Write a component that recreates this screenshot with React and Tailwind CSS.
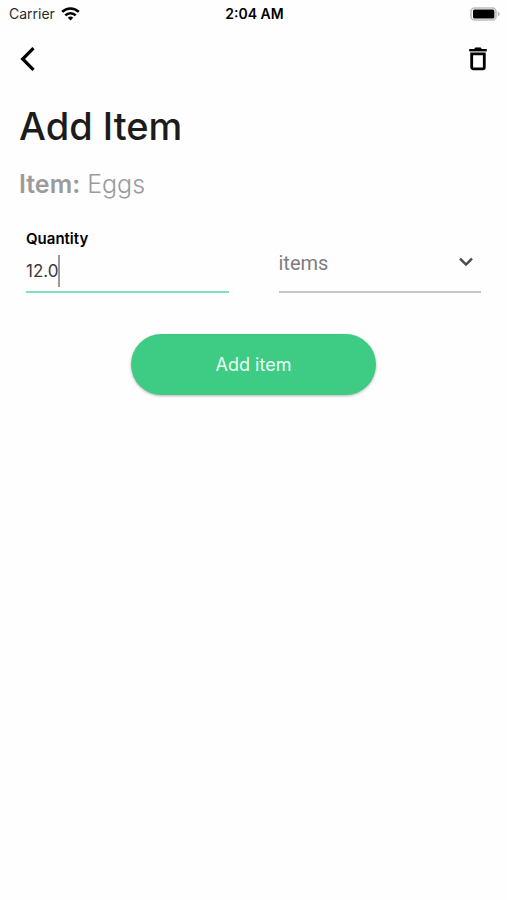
import React, { useState } from 'react';

function WifiIcon() {
    return (
        <svg width="19" height="14" viewBox="0 0 19 14" fill="none" stroke="#000" strokeWidth="2.7" aria-hidden="true">
            <path d="M1.2 4.9a11.8 11.8 0 0 1 16.6 0" />
            <path d="M4.3 8.4a7.4 7.4 0 0 1 10.4 0" />
            <path d="M9.5 13.6l-2.7-2.8a3.9 3.9 0 0 1 5.4 0z" fill="#000" stroke="none" />
        </svg>
    );
}

function BatteryIcon() {
    return (
        <svg width="30" height="14" viewBox="0 0 30 14" aria-hidden="true">
            <rect x="1" y="1" width="25" height="12" rx="3.5" fill="#fff" stroke="#bdbdbd" strokeWidth="1.6" />
            <rect x="3" y="2.6" width="21.4" height="8.8" rx="1.5" fill="#000" />
            <path d="M27.8 4.6v4.8c1-.4 1.8-1.3 1.8-2.4s-.8-2-1.8-2.4z" fill="#b5b5b5" />
        </svg>
    );
}

function BackIcon() {
    return (
        <svg width="16" height="24" viewBox="0 0 16 24" fill="none" stroke="#000" strokeWidth="3.2" aria-hidden="true">
            <path d="M13.5 1.2L2.7 12l10.8 10.8" />
        </svg>
    );
}

function TrashIcon() {
    return (
        <svg width="18" height="24" viewBox="0 0 18 24" fill="none" stroke="#000" aria-hidden="true">
            <path d="M0.2 3.2h17.6" strokeWidth="2.4" />
            <path d="M5.2 2.6l1.2-1.8h5.2l1.2 1.8z" fill="#000" strokeWidth="0.6" />
            <path d="M2.7 6.8h12.6v13.4a1.6 1.6 0 0 1-1.6 1.6H4.3a1.6 1.6 0 0 1-1.6-1.6z" strokeWidth="2.8" />
        </svg>
    );
}

function ChevronIcon() {
    return (
        <svg width="14" height="10" viewBox="0 0 14 10" fill="none" stroke="#4a4a4a" strokeWidth="2.4" aria-hidden="true">
            <path d="M1 1.6l6 6 6-6" />
        </svg>
    );
}

export default function App() {
    const [quantity, setQuantity] = useState('12.0');
    const [unit, setUnit] = useState('items');

    return (
        <div className="min-h-screen bg-[#fefefe] font-['Inter',sans-serif]">
            {/* Status bar */}
            <div className="grid h-7 grid-cols-3 items-center pl-[9px] pr-[7px] text-sm text-[#2a2a2a]">
                <div className="flex items-center gap-1.5">
                    <span>Carrier</span>
                    <WifiIcon />
                </div>
                <span className="text-center font-semibold text-black">2:04 AM</span>
                <div className="flex justify-end">
                    <BatteryIcon />
                </div>
            </div>

            {/* Header */}
            <header className="flex h-[62px] items-center justify-between px-5">
                <button type="button" aria-label="Back">
                    <BackIcon />
                </button>
                <button type="button" aria-label="Delete">
                    <TrashIcon />
                </button>
            </header>

            <main>
                <div className="px-[19px]">
                    <h1 className="pt-2.5 text-[38px] leading-[52px] font-medium text-[#1c1c1c]">Add Item</h1>
                    <p className="pt-4 text-[25px] leading-8 text-[#9b9b9b]">
                        <span className="font-semibold">Item:</span> <span className="font-light">Eggs</span>
                    </p>
                </div>

                <form onSubmit={(e) => e.preventDefault()} className="px-[26px] pt-7">
                    <div className="grid grid-cols-2 items-end gap-[50px]">
                        <div className="border-b-2 border-[#83e0b9]">
                            <label htmlFor="quantity" className="block text-[15px] leading-[22px] font-semibold text-black">
                                Quantity
                            </label>
                            <div className="flex h-[41px] items-end pb-1">
                                <input
                                    id="quantity"
                                    type="text"
                                    inputMode="decimal"
                                    value={quantity}
                                    onChange={(e) => setQuantity(e.target.value)}
                                    className="field-sizing-content h-8 max-w-full text-[17px] text-[#3a3a3a] caret-transparent outline-none"
                                />
                                <span className="h-8 w-0.5 bg-[#999]" aria-hidden="true" />
                            </div>
                        </div>

                        <div className="relative border-b-2 border-[#c8c8c8] pb-2.5">
                            <select
                                aria-label="Unit"
                                value={unit}
                                onChange={(e) => setUnit(e.target.value)}
                                className="block h-9 w-full appearance-none bg-transparent font-['Roboto',sans-serif] text-xl text-[#7d7d7d] outline-none"
                            >
                                <option value="items">items</option>
                            </select>
                            <span className="pointer-events-none absolute top-3 right-2">
                                <ChevronIcon />
                            </span>
                        </div>
                    </div>

                    <div className="flex justify-center pt-[41px]">
                        <button
                            type="submit"
                            className="w-[245px] rounded-full bg-[#3ecb84] py-4 text-lg leading-[29px] text-[#e9fff4] shadow-[0_1px_3px_rgba(0,0,0,0.3)]"
                        >
                            Add item
                        </button>
                    </div>
                </form>
            </main>
        </div>
    );
}
